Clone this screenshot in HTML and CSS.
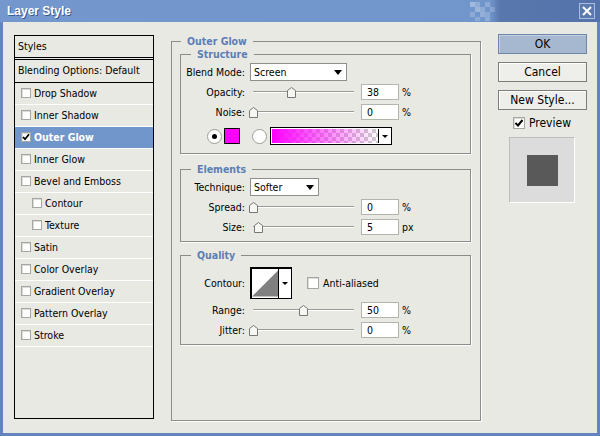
FILE: index.html
```html
<!DOCTYPE html>
<html lang="en">
<head>
  <meta charset="UTF-8" />
  <title>Layer Style</title>
  <link rel="stylesheet" href="styles.css">
</head>
<body>
  <div class="window">
    <div class="titlebar">
      <span class="title">Layer Style</span>
      <svg class="title-dots" width="32" height="22" viewBox="0 0 32 22">
        <rect x="2" y="2" width="5" height="5" fill="#fff" opacity=".35"/>
        <rect x="7" y="2" width="5" height="5" fill="#fff" opacity=".22"/>
        <rect x="17" y="2" width="5" height="5" fill="#fff" opacity=".2"/>
        <rect x="7" y="7" width="5" height="5" fill="#fff" opacity=".3"/>
        <rect x="12" y="7" width="5" height="5" fill="#fff" opacity=".2"/>
        <rect x="22" y="7" width="5" height="5" fill="#fff" opacity=".18"/>
        <rect x="2" y="12" width="5" height="5" fill="#fff" opacity=".2"/>
        <rect x="12" y="12" width="5" height="5" fill="#fff" opacity=".25"/>
        <rect x="17" y="12" width="5" height="5" fill="#fff" opacity=".18"/>
        <rect x="7" y="17" width="5" height="4" fill="#fff" opacity=".18"/>
        <rect x="17" y="17" width="5" height="4" fill="#fff" opacity=".2"/>
      </svg>
      <button class="close-btn" title="Close">
        <svg width="10" height="10" viewBox="0 0 10 10">
          <path d="M1 1 L9 9 M9 1 L1 9" stroke="#fff" stroke-width="2"/>
        </svg>
      </button>
    </div>

    <div class="frame">
      <!-- Style list -->
      <div class="styles-list">
        <div class="styles-head">Styles</div>
        <div class="styles-blend">Blending Options: Default</div>
        <div class="layer-item"><span class="check"></span>Drop Shadow</div>
        <div class="layer-item"><span class="check"></span>Inner Shadow</div>
        <div class="layer-item selected">
          <span class="check"><svg width="8" height="8" viewBox="0 0 8 8"><path d="M1 4 L3 6.2 L7 1.2" fill="none" stroke="#000" stroke-width="1.8"/></svg></span>Outer Glow
        </div>
        <div class="layer-item"><span class="check"></span>Inner Glow</div>
        <div class="layer-item"><span class="check"></span>Bevel and Emboss</div>
        <div class="layer-item sub"><span class="check"></span>Contour</div>
        <div class="layer-item sub"><span class="check"></span>Texture</div>
        <div class="layer-item"><span class="check"></span>Satin</div>
        <div class="layer-item"><span class="check"></span>Color Overlay</div>
        <div class="layer-item"><span class="check"></span>Gradient Overlay</div>
        <div class="layer-item"><span class="check"></span>Pattern Overlay</div>
        <div class="layer-item"><span class="check"></span>Stroke</div>
      </div>

      <!-- Outer Glow settings -->
      <fieldset class="group main-group">
        <legend>Outer Glow</legend>

        <fieldset class="group structure">
          <legend>Structure</legend>
          <div class="row">
            <span class="row-label">Blend Mode:</span>
            <div class="select blend-select"><span>Screen</span><i class="arrow"></i></div>
          </div>
          <div class="row">
            <span class="row-label">Opacity:</span>
            <div class="slider" style="--v:38"><div class="track"></div><svg class="thumb" width="9" height="11" viewBox="0 0 9 11"><path d="M0.5 10.5 V3.5 L4.5 0.5 L8.5 3.5 V10.5 Z" fill="#f6f6f2" stroke="#777"/></svg></div>
            <div class="num">38</div><span class="unit">%</span>
          </div>
          <div class="row">
            <span class="row-label">Noise:</span>
            <div class="slider" style="--v:0"><div class="track"></div><svg class="thumb" width="9" height="11" viewBox="0 0 9 11"><path d="M0.5 10.5 V3.5 L4.5 0.5 L8.5 3.5 V10.5 Z" fill="#f6f6f2" stroke="#777"/></svg></div>
            <div class="num">0</div><span class="unit">%</span>
          </div>
          <div class="row color-row">
            <span class="radio on"></span>
            <span class="swatch"></span>
            <span class="radio"></span>
            <div class="gradient-pick"><span class="gradient"></span><i class="arrow small"></i></div>
          </div>
        </fieldset>

        <fieldset class="group elements">
          <legend>Elements</legend>
          <div class="row">
            <span class="row-label">Technique:</span>
            <div class="select technique-select"><span>Softer</span><i class="arrow"></i></div>
          </div>
          <div class="row">
            <span class="row-label">Spread:</span>
            <div class="slider" style="--v:0"><div class="track"></div><svg class="thumb" width="9" height="11" viewBox="0 0 9 11"><path d="M0.5 10.5 V3.5 L4.5 0.5 L8.5 3.5 V10.5 Z" fill="#f6f6f2" stroke="#777"/></svg></div>
            <div class="num">0</div><span class="unit">%</span>
          </div>
          <div class="row">
            <span class="row-label">Size:</span>
            <div class="slider" style="--v:5"><div class="track"></div><svg class="thumb" width="9" height="11" viewBox="0 0 9 11"><path d="M0.5 10.5 V3.5 L4.5 0.5 L8.5 3.5 V10.5 Z" fill="#f6f6f2" stroke="#777"/></svg></div>
            <div class="num">5</div><span class="unit">px</span>
          </div>
        </fieldset>

        <fieldset class="group quality">
          <legend>Quality</legend>
          <div class="row contour-row">
            <span class="row-label">Contour:</span>
            <div class="contour-pick">
              <svg class="contour" width="29" height="29" viewBox="0 0 29 29"><rect width="29" height="29" fill="#fff"/><polygon points="0,29 29,0 29,29" fill="#808080"/></svg>
              <i class="arrow small"></i>
            </div>
            <span class="check big"></span><span>Anti-aliased</span>
          </div>
          <div class="row">
            <span class="row-label">Range:</span>
            <div class="slider" style="--v:50"><div class="track"></div><svg class="thumb" width="9" height="11" viewBox="0 0 9 11"><path d="M0.5 10.5 V3.5 L4.5 0.5 L8.5 3.5 V10.5 Z" fill="#f6f6f2" stroke="#777"/></svg></div>
            <div class="num">50</div><span class="unit">%</span>
          </div>
          <div class="row">
            <span class="row-label">Jitter:</span>
            <div class="slider" style="--v:0"><div class="track"></div><svg class="thumb" width="9" height="11" viewBox="0 0 9 11"><path d="M0.5 10.5 V3.5 L4.5 0.5 L8.5 3.5 V10.5 Z" fill="#f6f6f2" stroke="#777"/></svg></div>
            <div class="num">0</div><span class="unit">%</span>
          </div>
        </fieldset>
      </fieldset>

      <!-- Buttons and preview -->
      <div class="actions">
        <button class="btn btn-default">OK</button>
        <button class="btn">Cancel</button>
        <button class="btn">New Style...</button>
        <div class="preview-toggle">
          <span class="check big"><svg width="10" height="10" viewBox="0 0 10 10"><path d="M1.5 5 L4 7.5 L8.5 2" fill="none" stroke="#000" stroke-width="2"/></svg></span>Preview
        </div>
        <div class="preview-box"><div class="preview-square"></div></div>
      </div>
    </div>
  </div>
</body>
</html>
```

FILE: styles.css
```css
body {
  margin: 0;
  font-family: "DejaVu Sans Condensed", "DejaVu Sans", sans-serif;
  font-size: 10.5px;
  color: #000;
  background: #e9e9e3;
}

.window {
  width: 600px;
  height: 436px;
  display: flex;
  flex-direction: column;
  background: #e9e9e3;
}

/* Title bar */
.titlebar {
  height: 22px;
  flex: none;
  display: flex;
  align-items: center;
  padding: 0 5px 0 7px;
  background: linear-gradient(to right, #7498cd 0, #7196cb 490px, #5877ad 500px, #5473aa 100%);
}

.title {
  font: bold 12px "Liberation Sans", sans-serif;
  color: #fff;
  text-shadow: 1px 1px 0 #3b5a90;
}

.title-dots {
  margin-left: auto;
  margin-right: 79px;
}

.close-btn {
  width: 16px;
  height: 16px;
  padding: 0;
  display: flex;
  align-items: center;
  justify-content: center;
  background: #5a7ab0;
  border: 1px solid #a9bde0;
}

/* Body */
.frame {
  flex: 1;
  display: flex;
  align-items: flex-start;
  padding: 12px 10px 0 11px;
  border: 3px solid #6384be;
  border-top: 0;
}

.styles-list {
  width: 140px;
  height: 384px;
  flex: none;
  box-sizing: border-box;
  margin-top: 1px;
  border: 1px solid #000;
}

.styles-head {
  height: 21px;
  line-height: 21px;
  padding-left: 3px;
  border-bottom: 1px solid #000;
}

.styles-blend {
  height: 22px;
  line-height: 20px;
  padding-left: 3px;
  margin-top: 1px;
  border-top: 1px solid #000;
  border-bottom: 1px solid #000;
}

.layer-item {
  height: 22px;
  box-sizing: border-box;
  padding-bottom: 2px;
  display: flex;
  align-items: center;
  border-bottom: 1px solid #fff;
}

.layer-item .check {
  margin-left: 6px;
}

.layer-item.sub .check {
  margin-left: 17px;
}

.layer-item.selected {
  background: #7196cb;
  color: #fff;
  font-weight: bold;
}

.check {
  width: 10px;
  height: 10px;
  flex: none;
  box-sizing: border-box;
  margin-right: 3px;
  display: flex;
  align-items: center;
  justify-content: center;
  background: #fff;
  border: 1px solid #a6a6a2;
  box-shadow: inset 1px 1px 0 #dcdcd8;
}

.check.big {
  width: 12px;
  height: 12px;
  margin-right: 4px;
}

/* Group boxes */
.group {
  margin: 0;
  padding: 0;
  min-width: 0;
  border: 1px solid #8c8c88;
  box-shadow: 1px 1px 0 #fff;
}

.group legend {
  margin-left: 10px;
  padding: 0 6px;
  line-height: 13px;
  color: #5b7fb6;
  font-weight: bold;
}

.main-group {
  width: 310px;
  height: 386px;
  flex: none;
  box-sizing: border-box;
  margin: 1px 17px 0 17px;
  padding: 0 9px 0 8px;
}

.main-group > legend {
  margin-left: 1px;
}

.structure {
  padding: 2px 0 8px;
}

.elements {
  margin-top: 9px;
  padding: 2px 0 5px;
}

.quality {
  margin-top: 7px;
  padding: 5px 0 5px;
}

.row {
  height: 18px;
  display: flex;
  align-items: center;
}

.row + .row {
  margin-top: 2px;
}

.row-label {
  width: 64px;
  flex: none;
  margin-right: 5px;
  text-align: right;
}

/* Drop-down boxes */
.select {
  height: 18px;
  box-sizing: border-box;
  display: flex;
  align-items: center;
  padding-left: 3px;
  background: #fff;
  border: 1px solid #8e8e8a;
}

.select span {
  flex: 1;
}

.blend-select {
  width: 97px;
}

.technique-select {
  width: 69px;
}

.arrow {
  width: 0;
  height: 0;
  margin-right: 4px;
  border-left: 4.5px solid transparent;
  border-right: 4.5px solid transparent;
  border-top: 5px solid #000;
}

.arrow.small {
  margin: 0 3px;
  border-left-width: 3px;
  border-right-width: 3px;
  border-top-width: 3px;
}

/* Sliders */
.slider {
  position: relative;
  width: 108px;
  height: 18px;
  margin-right: 3px;
  flex: none;
}

.track {
  position: absolute;
  left: 3px;
  top: 8px;
  width: 101px;
  border-top: 1px solid #9a9a96;
  border-bottom: 1px solid #fff;
}

.thumb {
  position: absolute;
  top: 4px;
  left: calc(var(--v) * 1.01px - 1.5px);
}

.num {
  width: 38px;
  height: 16px;
  box-sizing: border-box;
  padding-left: 5px;
  line-height: 14px;
  background: #fff;
  border: 1px solid #b4b4ac;
}

.unit {
  margin-left: 3px;
}

/* Glow colour */
.color-row {
  padding-left: 26px;
}

.row.color-row {
  margin-top: 6px;
}

.radio {
  width: 15px;
  height: 15px;
  flex: none;
  box-sizing: border-box;
  display: flex;
  align-items: center;
  justify-content: center;
  border-radius: 50%;
  background: #fff;
  border: 1px solid #9c9c98;
}

.radio.on::after {
  content: "";
  width: 5px;
  height: 5px;
  border-radius: 50%;
  background: #000;
}

.swatch {
  width: 16px;
  height: 16px;
  box-sizing: border-box;
  margin: 0 12px 0 2px;
  background: #ff00ff;
  border: 1px solid #000;
}

.gradient-pick {
  width: 122px;
  height: 18px;
  box-sizing: border-box;
  margin-left: 3px;
  display: flex;
  align-items: center;
  border: 1px solid #000;
  background: #fff;
}

.gradient {
  flex: 1;
  align-self: stretch;
  margin: 1px;
  border-right: 1px solid #000;
  margin-right: 0;
  background:
    linear-gradient(to right, #ff00ff, rgba(255, 0, 255, 0)),
    repeating-conic-gradient(#cdcdcd 0 25%, #fff 0 50%) 0 0 / 8px 8px;
}

/* Contour */
.contour-row {
  height: 32px;
}

.contour-pick {
  width: 42px;
  height: 32px;
  box-sizing: border-box;
  margin-right: 15px;
  display: flex;
  align-items: center;
  background: #fff;
  border: 1px solid #000;
  border-width: 2px 1px 1px 2px;
}

.contour {
  border-right: 1px solid #000;
}

/* Right column */
.actions {
  width: 89px;
  flex: none;
  display: flex;
  flex-direction: column;
}

.btn {
  height: 20px;
  margin-bottom: 8px;
  padding: 0;
  font-family: inherit;
  font-size: 12px;
  color: #000;
  background: #eeeeea;
  border: 1px solid #7d7d7a;
  box-shadow: inset 1px 1px 0 #fff;
}

.btn-default {
  background: #a6b8d0;
  border-color: #6f85aa;
  box-shadow: inset 1px 1px 0 #c2d0e2;
}

.preview-toggle {
  height: 12px;
  margin: -1px 0 0 15px;
  display: flex;
  align-items: center;
  font-size: 12px;
}

.preview-box {
  width: 66px;
  height: 66px;
  box-sizing: border-box;
  margin: 8px 0 0 11px;
  display: flex;
  align-items: center;
  justify-content: center;
  background: #dcdcdc;
  border: 1px solid;
  border-color: #bdbdbd #fff #fff #bdbdbd;
}

.preview-square {
  width: 31px;
  height: 31px;
  background: #595959;
}
```
